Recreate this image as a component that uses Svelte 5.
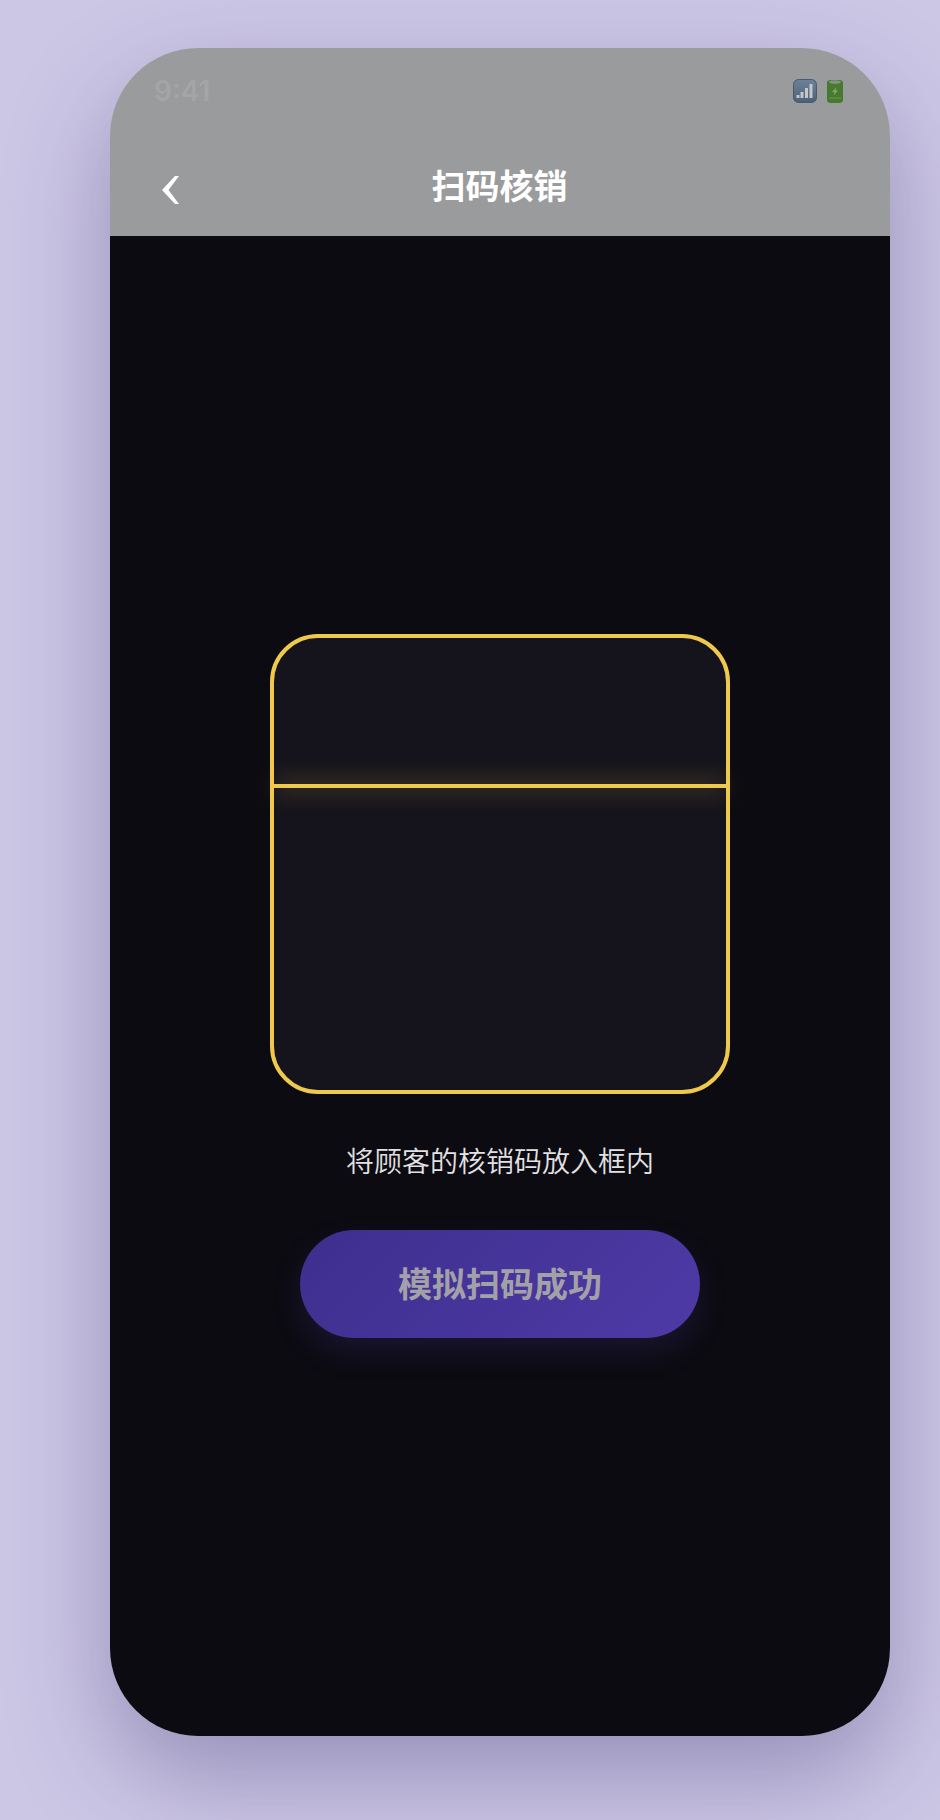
<script>
  let title = "扫码核销";
  let hint = "将顾客的核销码放入框内";
  let action = "模拟扫码成功";
</script>

<div class="page">
  <div class="phone">
    <div class="header">
      <div class="status">
        <span class="time">9:41</span>
        <div class="status-icons">
          <svg width="24" height="24" viewBox="0 0 24 24">
            <defs>
              <linearGradient id="sig" x1="0" y1="0" x2="0" y2="1">
                <stop offset="0" stop-color="#6d8299" />
                <stop offset="1" stop-color="#4c5f77" />
              </linearGradient>
            </defs>
            <rect x="0.5" y="0.5" width="23" height="23" rx="5" fill="url(#sig)" stroke="#4a5a6c" />
            <rect x="3.5" y="16" width="3" height="3" fill="#c4c7c9" />
            <rect x="7.5" y="13" width="3" height="6" fill="#c4c7c9" />
            <rect x="12" y="9" width="3" height="10" fill="#c4c7c9" />
            <rect x="16.5" y="5" width="3" height="14" fill="#c4c7c9" />
          </svg>
          <svg width="16" height="24" viewBox="0 0 16 24">
            <path d="M0 3.5 Q0 1 4 1 H12 Q16 1 16 3.5 V21 Q16 24 12 24 H4 Q0 24 0 21 Z" fill="#477a2c" />
            <ellipse cx="8" cy="3" rx="6" ry="1.8" fill="#82947e" />
            <path d="M9.5 8 L5 13 H7.5 L6.5 16.5 L11 11.5 H8.5 Z" fill="#86a478" />
            <rect x="2" y="18.5" width="12" height="1" fill="#6f9460" />
          </svg>
        </div>
      </div>
      <div class="nav">
        <svg class="back" width="17" height="28" viewBox="0 0 17 28">
          <path d="M13 0 H17 L6.5 14 L17 28 H13 L0 14 Z" fill="#fff" />
        </svg>
        <span class="title">{title}</span>
      </div>
    </div>

    <div class="content">
      <div class="scan-box">
        <div class="scan-line"></div>
      </div>
      <div class="hint">{hint}</div>
      <button class="action">{action}</button>
    </div>
  </div>
</div>

<style>
  :global(body) {
    margin: 0;
    background: #cdc7e6;
  }

  .page {
    height: 1820px;
    box-sizing: border-box;
    padding: 48px 50px 0 110px;
    background: #cdc7e6;
    font-family: "Noto Sans CJK SC", "Inter", sans-serif;
  }

  .phone {
    width: 780px;
    height: 1688px;
    border-radius: 88px;
    overflow: hidden;
    display: flex;
    flex-direction: column;
    background: linear-gradient(#9a9b9c 188px, #0c0b11 188px);
    box-shadow: 0 40px 100px rgba(50, 40, 100, 0.35);
  }

  .header {
    height: 188px;
    flex-shrink: 0;
    padding: 0 47px 0 44px;
    box-sizing: border-box;
  }

  .status {
    height: 86px;
    display: flex;
    align-items: center;
    justify-content: space-between;
  }

  .time {
    font-family: "Inter", sans-serif;
    font-size: 28px;
    font-weight: 600;
    color: #a4a5a6;
  }

  .status-icons {
    display: flex;
    align-items: center;
    gap: 10px;
  }

  .nav {
    position: relative;
    height: 92px;
    padding: 8px 0 0 2px;
    box-sizing: border-box;
    display: flex;
    align-items: center;
    justify-content: center;
  }

  .back {
    position: absolute;
    left: 8px;
    top: 42px;
  }

  .title {
    font-size: 34px;
    font-weight: 600;
    color: #fff;
  }

  .content {
    flex: 1;
    display: flex;
    flex-direction: column;
    align-items: center;
    padding-top: 398px;
  }

  .scan-box {
    position: relative;
    width: 460px;
    height: 460px;
    box-sizing: border-box;
    border: 4px solid #efc94c;
    border-radius: 48px;
    background: #15131c;
  }

  .scan-line {
    position: absolute;
    left: 0;
    right: 0;
    top: 146px;
    height: 4px;
    background: #efc94c;
    box-shadow: 0 0 24px rgba(239, 201, 76, 0.7);
  }

  .hint {
    margin-top: 46px;
    font-size: 28px;
    font-weight: 350;
    line-height: 40px;
    color: #e2e2e4;
  }

  .action {
    margin-top: 50px;
    width: 400px;
    height: 108px;
    padding: 0 0 4px;
    border: none;
    border-radius: 54px;
    background: linear-gradient(135deg, #3d2f8e, #4f3aa6);
    box-shadow: 0 14px 30px rgba(80, 60, 170, 0.2);
    font-family: inherit;
    font-size: 34px;
    font-weight: 600;
    color: #a3a1a8;
  }
</style>
